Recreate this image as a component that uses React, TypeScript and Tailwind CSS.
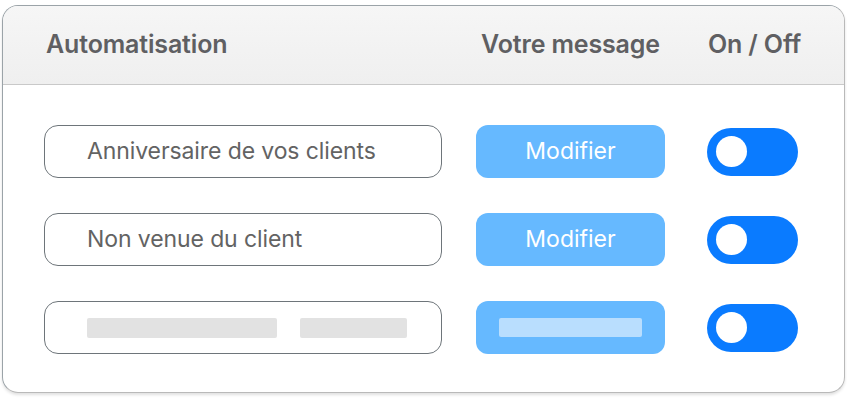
const rows = [
  { label: 'Anniversaire de vos clients', action: 'Modifier' },
  { label: 'Non venue du client', action: 'Modifier' },
  { label: null, action: null },
];

function Toggle() {
  return (
    <div className="flex h-[48px] w-[91px] items-center rounded-full bg-[#0a7bff] pl-[9px]">
      <div className="h-[31px] w-[31px] rounded-full bg-white" />
    </div>
  );
}

export default function App() {
  return (
    <div className="min-h-[402px] w-[847px] bg-white pl-[2px] pt-[5px] font-['Inter','Liberation_Sans',sans-serif]">
      <div className="w-[843px] overflow-hidden rounded-[16px] border border-[#9ba3a8] border-b-[#b9b9b9] border-r-[#b9b9b9] shadow-[0_2px_3px_rgba(0,0,0,0.12)]">
        <div className="flex h-[79px] items-center whitespace-nowrap border-b border-[#c9c9c9] bg-gradient-to-b from-[#f6f6f6] to-[#efefef] pl-[43px] text-[25px] font-semibold tracking-[-0.15px] text-[#5f5f62]">
          <div className="w-[432px]">Automatisation</div>
          <div className="w-[185px] text-center">Votre message</div>
          <div className="ml-[45px] w-[91px] text-center">On / Off</div>
        </div>
        <div className="flex flex-col gap-[35px] pb-[38px] pl-[41px] pt-[40px]">
          {rows.map((r, i) => (
            <div key={i} className="flex items-center">
              <div className="flex h-[53px] w-[398px] items-center rounded-[14px] border border-[#6e757a] pl-[42px] text-[23px] font-normal tracking-[-0.1px] text-[#636363]">
                {r.label ? (
                  r.label
                ) : (
                  <div className="flex gap-[23px]">
                    <div className="h-[20px] w-[190px] rounded-[2px] bg-[#e2e2e2]" />
                    <div className="h-[20px] w-[107px] rounded-[2px] bg-[#e2e2e2]" />
                  </div>
                )}
              </div>
              <div className="ml-[34px] flex h-[53px] w-[189px] items-center justify-center rounded-[12px] bg-[#66b9ff] text-[23px] font-normal text-white">
                {r.action ? r.action : <div className="h-[19px] w-[143px] rounded-[2px] bg-[#b9defe]" />}
              </div>
              <div className="ml-[42px]">
                <Toggle />
              </div>
            </div>
          ))}
        </div>
      </div>
    </div>
  );
}
